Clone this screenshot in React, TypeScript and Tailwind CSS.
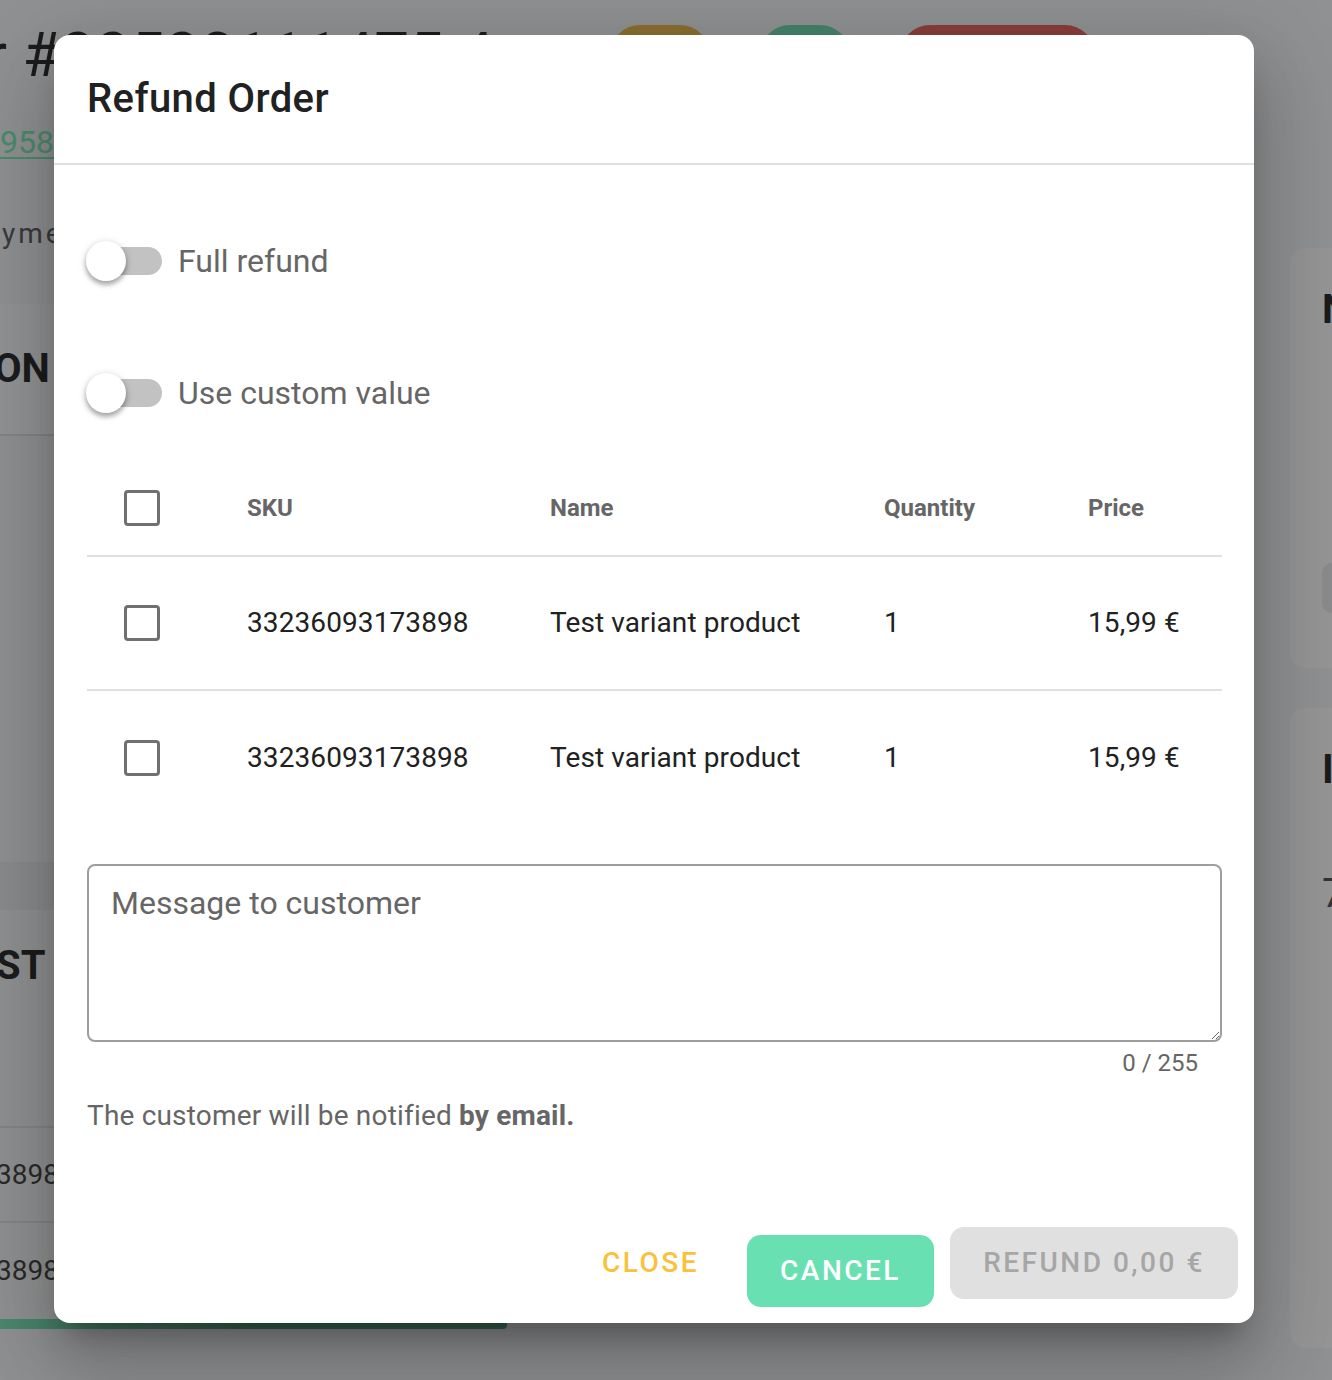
import React from "react";

const rows = [
  { sku: "33236093173898", name: "Test variant product", qty: "1", price: "15,99 €" },
  { sku: "33236093173898", name: "Test variant product", qty: "1", price: "15,99 €" },
];

function Switch({ label }: { label: string }) {
  return (
    <div className="flex h-[64px] items-center">
      <div className="relative h-[28px] w-[75px] rounded-full bg-[#c2c2c2]">
        <div className="absolute left-[-1px] top-[-6px] h-[40px] w-[40px] rounded-full bg-white shadow-[0_4px_4px_rgba(0,0,0,0.2),0_2px_6px_rgba(0,0,0,0.14),0_2px_10px_rgba(0,0,0,0.12)]" />
      </div>
      <span className="ml-[16px] text-[32px] text-[#666666]">{label}</span>
    </div>
  );
}

function Checkbox() {
  return <div className="h-[36px] w-[36px] rounded-[4px] border-[3px] border-[#707070]" />;
}

function Background() {
  return (
    <div className="flex h-full w-full flex-col font-['Roboto',sans-serif]">
      {/* header strip */}
      <div className="flex h-[110px] items-start pt-[22px]">
        <div className="ml-[-14px] w-[624px] text-[62px] leading-[66px] text-[#1c1c1c]">r #33530111475 4</div>
        <div className="mt-[3px] h-[60px] w-[100px] rounded-full bg-[#8c6f30]" />
        <div className="ml-[50px] mt-[3px] h-[60px] w-[90px] rounded-full bg-[#45836a]" />
        <div className="ml-[50px] mt-[3px] h-[60px] w-[195px] rounded-full bg-[#883e3b]" />
      </div>
      <div className="flex flex-1">
        {/* left column */}
        <div className="flex w-[507px] flex-col">
          <div className="mt-[12px] text-[32px] leading-[40px] text-[#4a8c6e] underline decoration-2 underline-offset-4">958</div>
          <div className="mt-[52px] ml-[2px] text-[28px] leading-[40px] tracking-[3px] text-[#3a3a3a]">yme</div>
          <div className="mt-[50px] flex h-[132px] items-center border-b-2 border-[#848586] bg-[#939495]">
            <span className="ml-[-6px] text-[40px] font-bold text-[#1c1c1c]">ON</span>
          </div>
          <div className="h-[426px]" />
          <div className="h-[48px] bg-[#8b8c8e]" />
          <div className="flex h-[216px] items-start pt-[32px]">
            <span className="ml-[-4px] text-[40px] font-bold leading-[48px] text-[#1c1c1c]">ST</span>
          </div>
          <div className="flex h-[95px] items-center border-t-2 border-[#858687]">
            <span className="ml-[-4px] text-[28px] text-[#2a2a2a]">3898</span>
          </div>
          <div className="flex h-[98px] items-center border-t-2 border-[#858687]">
            <span className="ml-[-4px] text-[28px] text-[#2a2a2a]">3898</span>
          </div>
          <div className="h-[10px] rounded-br-[4px] bg-gradient-to-r from-[#4b8a70] via-[#36634f] to-[#35624e]" />
        </div>
        <div className="flex-1" />
        {/* right column */}
        <div className="flex w-[42px] flex-col pt-[138px]">
          <div className="flex h-[420px] flex-col rounded-l-[16px] bg-[#959596] pl-[32px]">
            <span className="mt-[40px] text-[40px] font-bold leading-[44px] text-[#1c1c1c]">N</span>
            <div className="mt-[231px] h-[50px] rounded-l-[12px] bg-[#8a8b8c]" />
          </div>
          <div className="mt-[40px] flex h-[640px] flex-col rounded-l-[16px] bg-[#959596] pl-[32px]">
            <span className="mt-[40px] text-[40px] font-bold leading-[44px] text-[#1c1c1c]">I</span>
            <span className="mt-[80px] text-[40px] leading-[44px] text-[#333]">7</span>
          </div>
        </div>
      </div>
    </div>
  );
}

export default function App() {
  return (
    <div className="relative h-[1380px] w-[1332px] overflow-hidden bg-[#909192]">
      <Background />

      {/* Refund dialog */}
      <div className="absolute left-[54px] top-[35px] flex h-[1288px] w-[1200px] flex-col rounded-[16px] bg-white font-['Roboto',sans-serif] shadow-[0_22px_30px_-14px_rgba(0,0,0,0.3),0_48px_76px_6px_rgba(0,0,0,0.14),0_18px_92px_16px_rgba(0,0,0,0.12)]">
        <div className="border-b-2 border-[#e0e0e0] px-[33px] py-[32px]">
          <h2 className="text-[40px] font-medium leading-[64px] tracking-[0.4px] text-[#212121]">Refund Order</h2>
        </div>

        <div className="flex flex-1 flex-col pl-[33px] pr-[32px]">
          <div className="mt-[64px]">
            <Switch label="Full refund" />
          </div>
          <div className="mt-[68px]">
            <Switch label="Use custom value" />
          </div>

          {/* items table */}
          <div className="mt-[36px]">
            <div className="grid h-[96px] grid-cols-[160px_303px_334px_204px_1fr] items-center border-b-2 border-[#e0e0e0] text-[24px] font-bold text-[#666666]">
              <div className="pl-[37px]"><Checkbox /></div>
              <div>SKU</div>
              <div>Name</div>
              <div>Quantity</div>
              <div>Price</div>
            </div>
            {rows.map((r, i) => (
              <div
                key={i}
                className={
                  "grid h-[134px] grid-cols-[160px_303px_334px_204px_1fr] items-center text-[28px] tracking-[0.1px] text-[#212121] " +
                  (i < rows.length - 1 ? "border-b-2 border-[#e0e0e0]" : "")
                }
              >
                <div className="pl-[37px]"><Checkbox /></div>
                <div>{r.sku}</div>
                <div>{r.name}</div>
                <div>{r.qty}</div>
                <div>{r.price}</div>
              </div>
            ))}
          </div>

          {/* message */}
          <textarea
            placeholder="Message to customer"
            className="mt-[39px] h-[178px] w-[1135px] resize-y rounded-[8px] border-2 border-[#9e9e9e] px-[22px] pt-[15px] text-[32px] leading-[44px] text-[#212121] outline-none placeholder:text-[#666666]"
          />
          <div className="mt-[5px] pr-[24px] text-right text-[24px] leading-[32px] text-[#666666]">0 / 255</div>
          <p className="mt-[17px] text-[28px] leading-[40px] tracking-[0.18px] text-[#666666]">
            The customer will be notified <span className="font-bold">by email.</span>
          </p>
        </div>

        {/* actions */}
        <div className="flex items-start justify-end pb-[16px] pr-[16px]">
          <button className="h-[72px] rounded-[14px] px-[32px] text-[28px] font-medium tracking-[2.5px] text-[#f9c13c]">CLOSE</button>
          <button className="ml-[16px] mt-[8px] h-[72px] w-[187px] rounded-[14px] bg-[#69e0b2] text-[28px] font-medium tracking-[2.5px] text-white">CANCEL</button>
          <button className="ml-[16px] h-[72px] w-[288px] rounded-[14px] bg-[#e0e0e0] text-[28px] font-medium tracking-[2.5px] text-[#a6a6a6]">REFUND 0,00 €</button>
        </div>
      </div>
    </div>
  );
}
